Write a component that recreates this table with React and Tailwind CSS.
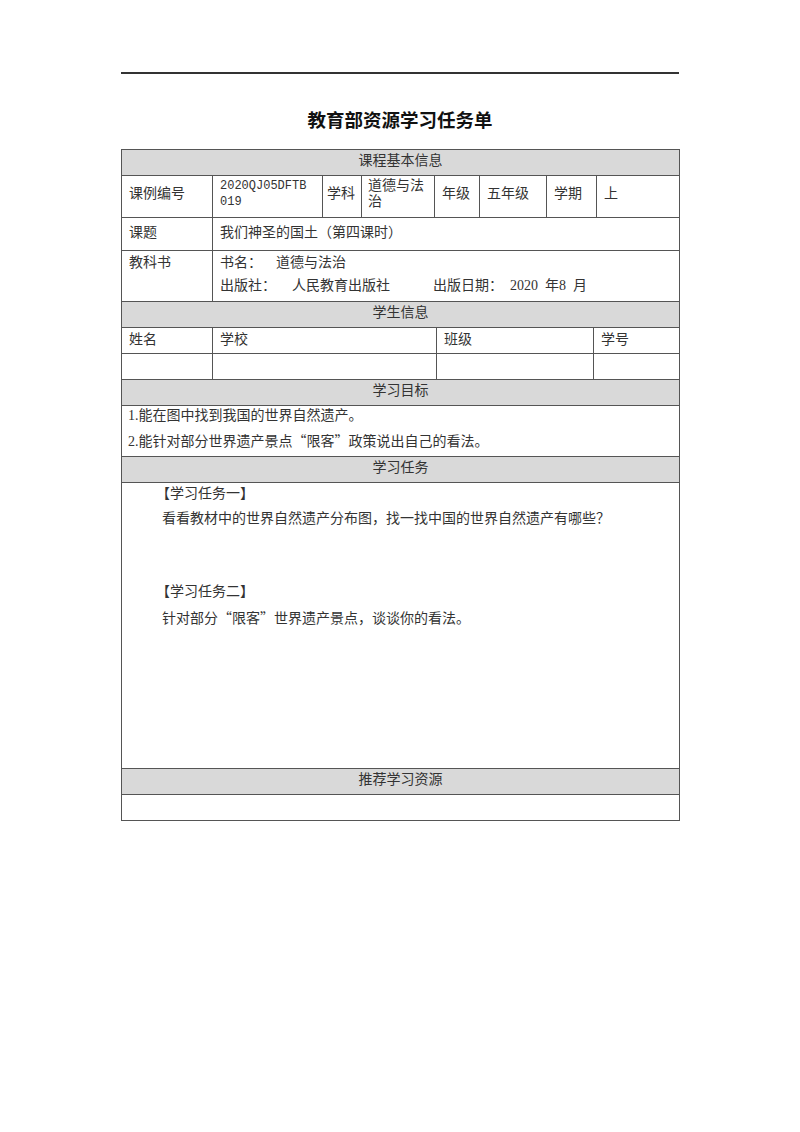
const body = { fontFamily: '"Liberation Serif", "Noto Sans CJK SC", serif' };
const cjk = { fontFamily: '"Noto Sans CJK SC", sans-serif' };

const Header = ({ children, h = "h-[26px]", first = false }) => (
  <div
    className={`${h} ${first ? "" : "border-t"} border-[#555] bg-[#d9d9d9] flex items-center justify-center pb-[5px] text-[14px] text-[#333]`}
  >
    {children}
  </div>
);

export default function App() {
  return (
    <div className="min-h-[1132px] w-[800px] bg-white pt-[72px] text-[#222]" style={body}>
      <div className="mx-[121px] h-[2px] bg-[#333]" />
      <h1
        className="mt-[32px] h-[26px] text-center text-[18.5px] font-bold leading-[26px] text-[#111]"
        style={cjk}
      >
        教育部资源学习任务单
      </h1>

      <div className="ml-[121px] mt-[17px] w-[559px] border border-[#555] text-[14px] text-[#333]">
        <Header h="h-[25px]" first>
          课程基本信息
        </Header>

        {/* course basic info */}
        <div className="grid h-[42px] grid-cols-[90px_110px_39px_73px_45px_67px_50px_83px] border-t border-[#555] leading-[16px]">
          <div className="flex items-center pb-[5px] pl-[7px]">课例编号</div>
          <div className="flex items-center border-l border-[#555] pb-[5px] pl-[7px]">
            <span style={{ fontFamily: '"Liberation Mono", monospace' }} className="text-[12px]">
              2020QJ05DFTB
              <br />
              019
            </span>
          </div>
          <div className="flex items-center border-l border-[#555] pb-[5px] pl-[4px]">学科</div>
          <div className="flex items-center border-l border-[#555] pb-[5px] pl-[6px]">
            道德与法
            <br />
            治
          </div>
          <div className="flex items-center border-l border-[#555] pb-[5px] pl-[7px]">年级</div>
          <div className="flex items-center border-l border-[#555] pb-[5px] pl-[7px]">五年级</div>
          <div className="flex items-center border-l border-[#555] pb-[5px] pl-[7px]">学期</div>
          <div className="flex items-center border-l border-[#555] pb-[5px] pl-[7px]">上</div>
        </div>

        <div className="grid h-[33px] grid-cols-[90px_1fr] border-t border-[#555]">
          <div className="pl-[7px] pt-[4px]">课题</div>
          <div className="border-l border-[#555] pl-[7px] pt-[4px]">我们神圣的国土（第四课时）</div>
        </div>

        <div className="grid h-[51px] grid-cols-[90px_1fr] border-t border-[#555] leading-[23px]">
          <div className="pl-[7px]">教科书</div>
          <div className="border-l border-[#555] pl-[7px]">
            <div className="flex">
              <span>书名：</span>
              <span className="ml-[14px]">道德与法治</span>
            </div>
            <div className="flex">
              <span>出版社：</span>
              <span className="ml-[16px]">人民教育出版社</span>
              <span className="ml-[43px]">出版日期：</span>
              <span className="ml-[7px] whitespace-pre">2020  年8  月</span>
            </div>
          </div>
        </div>

        <Header>学生信息</Header>

        <div className="grid h-[26px] grid-cols-[90px_224px_157px_86px] border-t border-[#555]">
          <div className="flex items-center pb-[3px] pl-[7px]">姓名</div>
          <div className="flex items-center border-l border-[#555] pb-[3px] pl-[7px]">学校</div>
          <div className="flex items-center border-l border-[#555] pb-[3px] pl-[7px]">班级</div>
          <div className="flex items-center border-l border-[#555] pb-[3px] pl-[7px]">学号</div>
        </div>
        <div className="grid h-[26px] grid-cols-[90px_224px_157px_86px] border-t border-[#555]">
          <div />
          <div className="border-l border-[#555]" />
          <div className="border-l border-[#555]" />
          <div className="border-l border-[#555]" />
        </div>

        <Header>学习目标</Header>

        <div className="h-[51px] border-t border-[#555] pl-[6px] leading-[25px]">
          <div className="-mt-[3px]">1.能在图中找到我国的世界自然遗产。</div>
          <div>
            2.能针对部分世界遗产景点<span style={cjk}>“</span>限客<span style={cjk}>”</span>政策说出自己的看法。
          </div>
        </div>

        <Header>学习任务</Header>

        <div className="h-[286px] border-t border-[#555] pl-[34px] leading-[24.6px]">
          <div className="-mt-[1px]">【学习任务一】</div>
          <div className="pl-[6px]">看看教材中的世界自然遗产分布图，找一找中国的世界自然遗产有哪些？</div>
          <div className="h-[49px]" />
          <div>【学习任务二】</div>
          <div className="pl-[6px]">
            针对部分<span style={cjk}>“</span>限客<span style={cjk}>”</span>世界遗产景点，谈谈你的看法。
          </div>
        </div>

        <Header>推荐学习资源</Header>
        <div className="h-[26px] border-t border-[#555]" />
      </div>
    </div>
  );
}
